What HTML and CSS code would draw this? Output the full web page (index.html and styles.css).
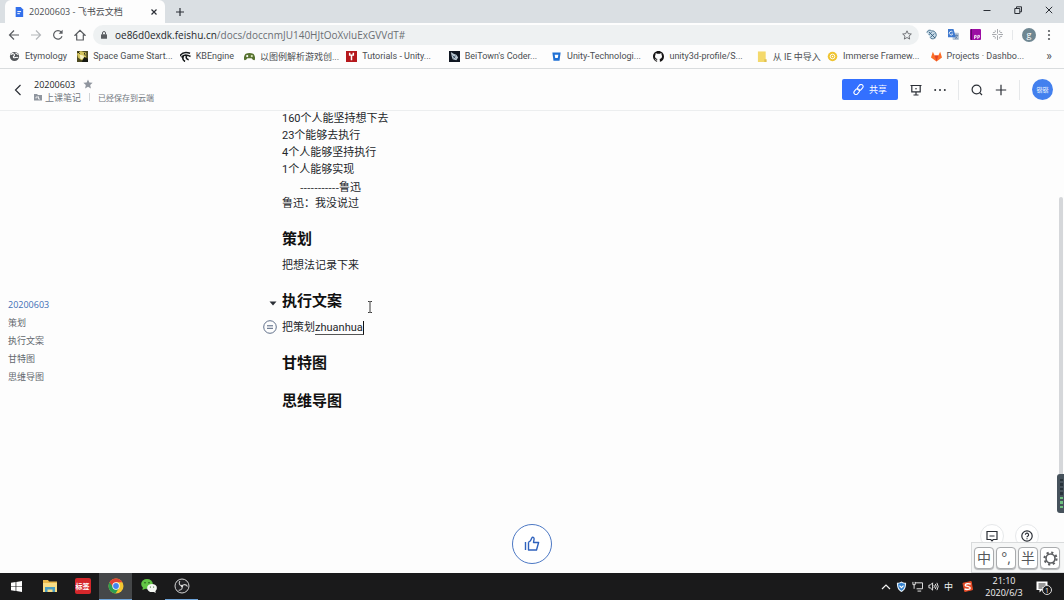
FILE: index.html
```html
<!DOCTYPE html>
<html lang="zh-CN">
<head>
<meta charset="utf-8">
<meta name="viewport" content="width=device-width, initial-scale=1">
<title>20200603 - 飞书云文档</title>
<link rel="stylesheet" href="styles.css">
</head>
<body>
<div class="tab-strip">
  <div class="tab">
    <svg class="ic-10" viewBox="0 0 10 12"><path d="M1 0h6l3 3v9H1z" fill="#3370eb"/><path d="M3 5.500h4.500M3 8h3" stroke="#fff" stroke-width="1.200"/></svg>
    <span class="tab-title">20200603 - 飞书云文档</span>
    <button class="plain" aria-label="关闭标签页"><svg class="ic-8" viewBox="0 0 8 8"><path d="M1.500 1.500l5 5M6.500 1.500l-5 5" class="ln"/></svg></button>
  </div>
  <button class="plain new-tab" aria-label="新标签页"><svg class="ic-10" viewBox="0 0 10 10"><path d="M5 1v8M1 5h8" class="ln"/></svg></button>
  <div class="window-buttons">
    <button class="plain" aria-label="最小化"><svg class="ic-8" viewBox="0 0 8 8"><path d="M.5 4.500h7" class="ln thin"/></svg></button>
    <button class="plain" aria-label="还原"><svg class="ic-8" viewBox="0 0 8 8"><path d="M.8 2.500h5v5h-5zM2.500 2.500V.8h5v5H5.800" class="ln thin"/></svg></button>
    <button class="plain" aria-label="关闭"><svg class="ic-8" viewBox="0 0 8 8"><path d="M.8.8l6.400 6.400M7.200.8L.8 7.200" class="ln thin"/></svg></button>
  </div>
</div>

<div class="toolbar">
  <div class="nav-buttons">
    <button class="plain" aria-label="后退"><svg class="ic-12" viewBox="0 0 12 12"><path d="M11 6H2M6 1.500L1.500 6 6 10.500" class="ln grey"/></svg></button>
    <button class="plain" aria-label="前进"><svg class="ic-12" viewBox="0 0 12 12"><path d="M1 6h9M6 1.500L10.500 6 6 10.500" class="ln pale"/></svg></button>
    <button class="plain" aria-label="刷新"><svg class="ic-12" viewBox="0 0 12 12"><path d="M10 7.200A4.300 4.300 0 1 1 9.300 3.200" class="ln grey"/><path d="M10.600.8v4h-4z" fill="#5a5d61"/></svg></button>
    <button class="plain" aria-label="主页"><svg class="ic-12" viewBox="0 0 12 12"><path d="M1 6.200L6 1.300l5 4.900H9.300V11H2.700V6.200z" class="ln grey"/></svg></button>
  </div>
  <div class="address">
    <svg class="ic-8" viewBox="0 0 8 8"><rect x="1" y="3.200" width="6" height="4.600" rx=".6" fill="#5a5d61"/><path d="M2.500 3.500V2a1.500 1.500 0 0 1 3 0v1.500" fill="none" stroke="#5a5d61"/></svg>
    <span class="url"><span class="host">oe86d0exdk.feishu.cn</span>/docs/doccnmJU140HJtOoXvIuExGVVdT#</span>
    <button class="plain" aria-label="收藏此页"><svg class="ic-10" viewBox="0 0 12 12"><path d="M6 1l1.500 3.400 3.700.4-2.800 2.500.8 3.600L6 9l-3.200 1.900.8-3.600L.8 4.800l3.700-.4z" class="ln grey thin"/></svg></button>
  </div>
  <div class="extensions">
    <svg class="ic-11" viewBox="0 0 12 12"><path d="M1 4a3 3 0 0 1 5-2 4.500 4.500 0 0 1 4 7.500C8 11.500 5 11 4.500 9" fill="#c8dbe8" stroke="#456d8b"/><path d="M3 3l7 7M3 6.500L6 3.500M5 9l4-4" stroke="#355d7d"/></svg>
    <svg class="ic-11" viewBox="0 0 12 12"><rect x="5" y="4" width="7" height="8" rx="1" fill="#b9c7d8"/><path d="M7 7h4M9 6v1M10.500 7l-2.500 4M8 8.500l2.500 2" stroke="#52739f" stroke-width=".8"/><path d="M0 0h6l2.500 9H0z" fill="#3f79cf"/><path d="M5 3.200A2 2 0 1 0 5.200 5.500H3.800" fill="none" stroke="#fff" stroke-width=".9"/></svg>
    <svg class="ic-11" viewBox="0 0 12 12"><rect width="12" height="12" rx="1" fill="#9c0da4"/><path d="M1.500 0v12" stroke="#510759"/><path d="M5 11V7h1.800v2H5M8.500 11V7h1.800v2H8.500" fill="none" stroke="#fff" stroke-width=".9"/></svg>
    <svg class="ic-11" viewBox="0 0 12 12"><path d="M6 0v5M6 7v5M0 6h5M7 6h5M3.500 1.500Q4.500 4 1 4M8.500 1.500Q7.500 4 11 4M3.500 10.500Q4.500 8 1 8M8.500 10.500Q7.500 8 11 8" fill="none" stroke="#94979b" stroke-width=".9"/></svg>
    <span class="divider"></span>
    <span class="profile">g</span>
    <button class="plain" aria-label="菜单"><svg class="ic-dots" viewBox="0 0 4 12"><g fill="#5a5d61"><circle cx="2" cy="2" r="1.100"/><circle cx="2" cy="6" r="1.100"/><circle cx="2" cy="10" r="1.100"/></g></svg></button>
  </div>
</div>

<nav class="bookmarks">
  <a href="#"><svg class="ic-11" viewBox="0 0 12 12"><circle cx="6" cy="6" r="5" fill="#55585c"/><path d="M2 4c2-2 4-1 4 .5S4 5.500 5 7s3-1 5 0M7 2l3 2" stroke="#fff" stroke-width="1.200" fill="none"/></svg><span>Etymology</span></a>
  <a href="#"><svg class="ic-11" viewBox="0 0 12 12"><rect width="12" height="12" fill="#4e4b22"/><path d="M0 3l4-3 6 2v5l-5 3-4-3z" fill="#d4c45d"/><path d="M3 4l4 1 1 3-4 1z" fill="#f6f0c2"/><path d="M8 7l4 2v3H6zM1 1l2 2M8 2l1 3" fill="#171912" stroke="#171912"/></svg><span>Space Game Start...</span></a>
  <a href="#"><svg class="ic-11" viewBox="0 0 12 12"><path d="M0 5.500C2 2 5 .5 11 2.500M1.500 7C4 3.500 7 3.500 11.500 6M4 5c-1.500 2.500-1 5 1.500 6.500M7.500 5C6 7 7 9 9.500 9.500" fill="none" stroke="#15191a" stroke-width="1.700"/></svg><span>KBEngine</span></a>
  <a href="#"><svg class="ic-11" viewBox="0 0 12 12"><path d="M2 3c2-1 6-1 8 0s3 7 1 7-2-2-3-2H4c-1 0-1 2-3 2S0 4 2 3z" fill="#587331"/><circle cx="3.500" cy="5.500" r="1.200" fill="#fff"/><circle cx="8.500" cy="5.500" r="1.200" fill="#dbe9bd"/></svg><span>以图例解析游戏创...</span></a>
  <a href="#"><svg class="ic-11" viewBox="0 0 12 12"><rect width="12" height="12" fill="#b5181c"/><path d="M4 2v2.500h4V2M6 4.500V10" stroke="#fff" stroke-width="1.600" fill="none"/></svg><span>Tutorials - Unity...</span></a>
  <a href="#"><svg class="ic-11" viewBox="0 0 12 12"><rect width="12" height="12" fill="#101722"/><path d="M2 1l3 2 3 1 2 3-2 3-4-1-1-3z" fill="#b9c7d2"/><path d="M4 5l3 3M7 5L5 8" stroke="#34495c"/></svg><span>BeiTown's Coder...</span></a>
  <a href="#"><svg class="ic-11" viewBox="0 0 12 12"><path d="M1.500 1.500h9L9.300 10.500H2.700z" fill="#1f70d4"/><path d="M4 4h4l-.6 3.500H4.600z" fill="#fff"/></svg><span>Unity-Technologi...</span></a>
  <a href="#"><svg class="ic-11" viewBox="0 0 16 16"><path fill="#171515" d="M8 0C3.580 0 0 3.580 0 8c0 3.540 2.290 6.530 5.470 7.590.4.070.55-.17.55-.38 0-.19-.01-.82-.01-1.490-2.010.37-2.530-.49-2.690-.94-.09-.23-.48-.94-.82-1.130-.28-.15-.68-.52-.01-.53.63-.01 1.080.58 1.230.82.72 1.210 1.870.87 2.330.66.07-.52.28-.87.51-1.070-1.780-.2-3.640-.89-3.640-3.950 0-.87.31-1.590.82-2.150-.08-.2-.36-1.020.08-2.120 0 0 .67-.21 2.200.82a7.600 7.600 0 0 1 4 0c1.530-1.040 2.200-.82 2.200-.82.44 1.100.16 1.920.08 2.120.51.56.82 1.270.82 2.150 0 3.070-1.870 3.750-3.650 3.950.29.25.54.73.54 1.480 0 1.070-.01 1.930-.01 2.200 0 .21.15.46.55.38A8 8 0 0 0 16 8c0-4.420-3.580-8-8-8z"/></svg><span>unity3d-profile/S...</span></a>
  <a href="#"><svg class="ic-11" viewBox="0 0 12 12"><path d="M1 .5h8.500V12H1z" fill="#f4d96c"/><path d="M8 9h2.500v3H8z" fill="#e0c050"/></svg><span>从 IE 中导入</span></a>
  <a href="#"><svg class="ic-11" viewBox="0 0 12 12"><circle cx="6" cy="6" r="5.200" fill="#efc431"/><circle cx="6" cy="6" r="2.500" fill="none" stroke="#fff"/><circle cx="6" cy="6" r=".8" fill="#fff"/></svg><span>Immerse Framew...</span></a>
  <a href="#"><svg class="ic-11" viewBox="0 0 12 12"><path d="M6 11.500L0 7 2 .8 4 5h4l2-4.200L12 7z" fill="#fc6d26"/><path d="M6 11.500L4 5h4z" fill="#e24329"/></svg><span>Projects · Dashbo...</span></a>
  <button class="plain more" aria-label="更多书签">»</button>
</nav>

<header class="doc-header">
  <button class="plain" aria-label="返回"><svg class="ic-12" viewBox="0 0 12 12"><path d="M8.500 1L3.500 6l5 5" class="ln"/></svg></button>
  <div class="doc-info">
    <div class="doc-name"><span>20200603</span><svg class="ic-10" viewBox="0 0 12 12"><path d="M6 .5l1.600 3.700 4 .4-3 2.700.9 4L6 9.200l-3.500 2.100.9-4-3-2.700 4-.4z" fill="#8f959e"/></svg></div>
    <div class="doc-meta"><svg class="ic-8" viewBox="0 0 8 8"><path d="M0 1h3l1 1h4v5.500H0z" fill="#8f959e"/><path d="M2 5.500V4h2.500M4.500 3.500v2.500H6" fill="none" stroke="#fff" stroke-width=".8"/></svg><a href="#">上课笔记</a><span class="divider short"></span><span class="saved">已经保存到云端</span></div>
  </div>
  <div class="doc-actions">
    <button class="share"><svg class="ic-11" viewBox="0 0 12 12"><g fill="none" stroke="#fff" stroke-width="1.200" transform="rotate(-50 6 6)"><rect x="-.5" y="3.800" width="7" height="4.400" rx="2.200"/><rect x="5.500" y="3.800" width="7" height="4.400" rx="2.200"/></g></svg><span>共享</span></button>
    <button class="plain" aria-label="演示"><svg class="ic-12" viewBox="0 0 12 12"><path d="M.5 1.500h11M1.800 1.500v6.300h8.400V1.500M6 7.800v3M3.500 11h5" class="ln"/><circle cx="6" cy="4.700" r=".8" fill="#2b2f36"/></svg></button>
    <button class="plain" aria-label="更多"><svg class="ic-12" viewBox="0 0 12 12"><g fill="#2b2f36"><circle cx="1.200" cy="6" r="1"/><circle cx="6" cy="6" r="1"/><circle cx="10.800" cy="6" r="1"/></g></svg></button>
    <span class="divider"></span>
    <button class="plain" aria-label="搜索"><svg class="ic-12" viewBox="0 0 12 12"><circle cx="5.500" cy="5.500" r="4.400" class="ln"/><path d="M8.700 8.700L11 11" class="ln"/></svg></button>
    <button class="plain" aria-label="新建"><svg class="ic-12" viewBox="0 0 12 12"><path d="M6 .8v10.400M.8 6h10.400" class="ln"/></svg></button>
    <span class="divider"></span>
    <span class="avatar">锴锴</span>
  </div>
</header>

<main class="workspace">
  <nav class="outline">
    <a class="current" href="#">20200603</a>
    <a href="#plan">策划</a>
    <a href="#copy">执行文案</a>
    <a href="#gantt">甘特图</a>
    <a href="#mind">思维导图</a>
  </nav>
  <article class="document">
    <p>160个人能坚持想下去</p>
    <p>23个能够去执行</p>
    <p>4个人能够坚持执行</p>
    <p>1个人能够实现</p>
    <p class="signature">-----------鲁迅</p>
    <p>鲁迅：我没说过</p>
    <h2 id="plan">策划</h2>
    <p>把想法记录下来</p>
    <h2 id="copy"><svg class="fold" viewBox="0 0 8 5"><path d="M.5.5h7L4 4.500z" fill="#2b2f36"/></svg>执行文案
      <svg class="pointer" viewBox="0 0 6 12"><path d="M1 .5h1.500L3 1l.5-.5H5M3 1v10M1 11.500h1.500L3 11l.5.5H5" fill="none" stroke="#222" stroke-width=".9"/></svg></h2>
    <p class="editing"><svg class="block-mark" viewBox="0 0 14 14"><circle cx="7" cy="7" r="6.300" fill="none" stroke="#50617e" stroke-width=".9"/><path d="M4 5.800h6M4 8.300h6" stroke="#50617e"/></svg>把策划<span class="composing">zhuanhua</span></p>
    <h2 id="gantt">甘特图</h2>
    <h2 id="mind">思维导图</h2>
  </article>

  <button class="like" aria-label="点赞"><svg viewBox="0 0 16 16"><path d="M1.500 6v8M4.500 6.200v7.800h8L14.600 6.500H9.500l.6-3.500C10.300 1.500 8.500.7 7.800 2L6.500 4.700 4.500 6.200" fill="none" stroke="#2f62bd" stroke-width="1.400" stroke-linejoin="round"/></svg></button>
  <div class="help-buttons">
    <button aria-label="评论"><svg class="ic-12" viewBox="0 0 12 12"><path d="M1 1.500h10v8H7.200L6 10.800 4.800 9.500H1zM3.500 6h5" class="ln"/></svg></button>
    <button aria-label="帮助"><svg class="ic-12" viewBox="0 0 12 12"><circle cx="6" cy="6" r="5.200" class="ln"/><path d="M4.400 4.700a1.600 1.600 0 1 1 2.300 1.500c-.5.3-.7.500-.7 1.100M6 8.200v1" class="ln"/></svg></button>
  </div>
  <div class="scroll-thumb"></div>
  <div class="meter"><i></i><i></i><i></i><i></i><i class="on"></i><i class="on"></i><i class="on"></i></div>
  <div class="ime">
    <button>中</button>
    <button>°,</button>
    <button>半</button>
    <button aria-label="设置"><svg viewBox="0 0 14 14"><circle cx="7" cy="7" r="4.200" fill="none" stroke="#5d5f62" stroke-width="1.500"/><circle cx="7" cy="7" r="5.600" fill="none" stroke="#5d5f62" stroke-width="2" stroke-dasharray="2 2.398"/></svg></button>
  </div>
</main>

<footer class="taskbar">
  <button aria-label="开始"><svg class="ic-11" viewBox="0 0 12 12"><path d="M0 1.800l5-.7v4.500H0zM5.800 1L12 0v5.600H5.800zM0 6.400h5v4.500l-5-.7zM5.800 6.400H12V12l-6.200-1z" fill="#fff"/></svg></button>
  <button aria-label="文件资源管理器"><svg class="ic-16" viewBox="0 0 16 16"><path d="M1 2h5l1 1.500h8V14H1z" fill="#e9b94c"/><path d="M1 5h14v9H1z" fill="#f8dd85"/><path d="M3 14V9h10v5h-2.500v-2.500h-5V14z" fill="#4a9ec2"/></svg></button>
  <button aria-label="标签"><span class="red-app">标签</span></button>
  <button class="active" aria-label="Chrome"><svg class="ic-16" viewBox="0 0 16 16"><circle cx="8" cy="8" r="7.500" fill="#f5c731"/><path d="M1.500 4.250A7.500 7.500 0 0 0 7.500 15.500L11.200 9.800 8 8z" fill="#2c9f51"/><path d="M1.500 4.250A7.500 7.500 0 0 1 14.500 4.300H8L5 9z" fill="#df4335"/><circle cx="8" cy="8" r="3.700" fill="#fff"/><circle cx="8" cy="8" r="2.900" fill="#4385ee"/></svg></button>
  <button aria-label="微信"><svg class="ic-16" viewBox="0 0 16 16"><ellipse cx="6" cy="6" rx="5.800" ry="4.900" fill="#62c545"/><path d="M2 9l-.6 3L5 10.500z" fill="#62c545"/><ellipse cx="11" cy="10" rx="4.900" ry="4.100" fill="#f4f7f2"/><path d="M12 13.500l2.700 1.500-.5-3z" fill="#f4f7f2"/><g fill="#24531b"><circle cx="4" cy="4.700" r=".8"/><circle cx="8" cy="4.700" r=".8"/><circle cx="9.400" cy="9" r=".6"/><circle cx="12.600" cy="9" r=".6"/></g></svg></button>
  <button class="running" aria-label="OBS"><svg class="ic-16" viewBox="0 0 16 16"><circle cx="8" cy="8" r="7" fill="#222225" stroke="#d5d5d5"/><g fill="none" stroke="#c9c9c9" stroke-width="1.100"><path d="M8 8C5.500 7.500 4.500 5.500 5.800 3"/><path d="M8 8c1.700-2 4-1.800 5.500.5"/><path d="M8 8c.8 2.400-.5 4.200-3.300 4.400"/></g><circle cx="8" cy="8" r="1.200" fill="#ddd"/></svg></button>
  <div class="tray">
    <svg class="ic-10" viewBox="0 0 10 10"><path d="M1 7l4-4 4 4" class="ln white"/></svg>
    <svg class="ic-11" viewBox="0 0 12 12"><path d="M1 2c2 0 4-.5 5-1.500C7 1.500 9 2 11 2c0 5-1 8-5 10C2 10 1 7 1 2z" fill="#e9f3fb"/><path d="M2.300 3C4 3 5 2.500 6 2c1 .5 2 1 3.700 1 0 4-1 6-3.700 7.500C3.300 9 2.300 7 2.300 3z" fill="#3180ce"/><path d="M3.800 5L6 7.300 8.200 5" stroke="#fff" stroke-width="1.300" fill="none"/></svg>
    <svg class="ic-11" viewBox="0 0 12 12"><path d="M3.500 2H11.500v6.500H5M1 1v3h2.500V1M2.300 4v4.500M6 11h4" class="ln white thin"/></svg>
    <svg class="ic-11" viewBox="0 0 12 12"><path d="M1 4.500h1.500L5 2v8L2.500 7.500H1zM6.500 4.500q1 1.500 0 3M8 3.200q2 2.800 0 5.600M9.700 2q2.800 4 0 8" class="ln white thin"/></svg>
    <span class="lang">中</span>
    <svg class="ic-11 sogou" viewBox="0 0 12 12"><path d="M1 2.500L10 .5l1.500 9L3 11.500z" fill="#e94d27" stroke="#e94d27" stroke-linejoin="round"/><path d="M9.500 3.500C7 2.500 3.500 2.800 3.500 4.500s5.500 1.200 5.500 3S5 9.800 2.800 8.700" fill="none" stroke="#fff" stroke-width="1.500"/></svg>
    <div class="clock"><time>21:10</time><span>2020/6/3</span></div>
    <div class="notice"><svg class="ic-12" viewBox="0 0 12 12"><path d="M.5.5h11v8.500H6L3.500 11.500V9h-3z" fill="#fff"/><path d="M2.500 3h7M2.500 5h7M2.500 7h4" stroke="#1b1b1b" stroke-width=".9"/></svg><span class="count">1</span></div>
  </div>
</footer>
</body>
</html>
```

FILE: styles.css
```css
* { box-sizing: border-box; }

body {
  display: flex;
  flex-direction: column;
  height: 100vh;
  margin: 0;
  overflow: hidden;
  background: #fdfdfd;
  color: #24272b;
  font-family: "Open Sans", "Noto Sans CJK SC", sans-serif;
  font-size: 9px;
}

a { color: inherit; text-decoration: none; }
button { padding: 0; border: 0; font: inherit; color: inherit; }
svg { display: block; flex: none; }

.plain { display: grid; place-items: center; background: none; }

.ic-8 { width: 8px; height: 8px; }
.ic-10 { width: 10px; height: 10px; }
.ic-11 { width: 11px; height: 11px; }
.ic-12 { width: 12px; height: 12px; }
.ic-16 { width: 16px; height: 16px; }
.ic-dots { width: 4px; height: 12px; }

.ln { fill: none; stroke: #2b2f36; stroke-width: 1.2; }
.thin { stroke-width: 1; }
.grey { stroke: #5a5d61; }
.pale { stroke: #b4b7ba; }
.white { stroke: #f2f2f2; }

.divider { width: 1px; height: 20px; background: #e6e8ea; }
.divider.short { height: 8px; background: #d0d3d6; }

/* Browser window */
.tab-strip {
  display: flex;
  flex: none;
  height: 23px;
  padding-left: 5px;
  background: #dadfe3;
}
.tab {
  display: flex;
  align-items: center;
  gap: 5px;
  width: 160px;
  padding: 0 7px 0 9px;
  border-radius: 6px 6px 0 0;
  background: #fdfdfd;
}
.tab-title { flex: 1; color: #4b4e52; white-space: nowrap; }
.new-tab { width: 30px; }
.window-buttons {
  display: flex;
  gap: 23px;
  height: 19px;
  margin-left: auto;
  padding-right: 11px;
}

.toolbar {
  display: flex;
  align-items: center;
  flex: none;
  height: 23px;
  padding: 0 13px 0 8px;
}
.nav-buttons { display: flex; gap: 10px; }
.address {
  display: flex;
  flex: 1;
  align-items: center;
  gap: 7px;
  height: 20px;
  margin: 0 7px;
  padding: 0 7px;
  border-radius: 10px;
  background: #eef1f2;
}
.url { flex: 1; color: #6a6e73; font-size: 10px; }
.host { color: #24272b; }
.extensions { display: flex; align-items: center; gap: 11px; }
.extensions .divider { height: 10px; margin: 0 -2px; }
.profile {
  display: grid;
  place-items: center;
  width: 14px;
  height: 14px;
  border-radius: 50%;
  background: #6f8792;
  color: #fff;
}

.bookmarks {
  display: grid;
  grid-template-columns: 68fr 102fr 64fr 102fr 102fr 102fr 102fr 103fr 70fr 103fr 106fr 24fr;
  align-items: center;
  flex: none;
  height: 23px;
  padding: 0 3px 2px 9px;
  border-bottom: 1px solid #d9dcde;
  color: #4b4e52;
  font-family: Roboto, "Noto Sans CJK SC", sans-serif;
}
.bookmarks a { display: flex; align-items: center; gap: 5px; min-width: 0; white-space: nowrap; }
.more { font-size: 12px; }

/* Document header */
.doc-header {
  display: flex;
  align-items: center;
  flex: none;
  height: 42px;
  padding: 0 11px 0 12px;
  border-bottom: 1px solid #eceeef;
}
.doc-info { margin-left: 10px; padding-top: 2px; line-height: 13px; }
.doc-name, .doc-meta { display: flex; align-items: center; }
.doc-name { gap: 8px; }
.doc-meta { gap: 3px; color: #73787f; }
.doc-meta .divider { margin: 0 5px; }
.saved { font-size: 8px; }
.doc-actions { display: flex; align-items: center; gap: 12px; margin-left: auto; }
.share {
  display: flex;
  align-items: center;
  justify-content: center;
  gap: 5px;
  width: 56px;
  height: 21px;
  border-radius: 2px;
  background: #3370ff;
  color: #fff;
}
.avatar {
  display: grid;
  place-items: center;
  width: 21px;
  height: 21px;
  border-radius: 50%;
  background: #4380ee;
  color: #fff;
  font-size: 6px;
}

/* Document body */
.workspace {
  position: relative;
  display: flex;
  flex: 1;
  min-height: 0;
  overflow: hidden;
}
.outline {
  display: flex;
  flex-direction: column;
  align-self: center;
  flex: none;
  width: 282px;
  padding: 0 0 2px 8px;
  color: #63686e;
  line-height: 18px;
}
.outline .current { color: #426fb5; }
.document {
  flex: 1;
  margin-top: -1px;
  font-family: Roboto, "Noto Sans CJK SC", sans-serif;
  font-size: 11px;
  line-height: 17px;
}
.document p { margin: 0; }
.document .signature {
  padding-left: 18px;
  font-family: "Open Sans", "Noto Sans CJK SC", sans-serif;
}
.document h2 {
  position: relative;
  margin: 17px 0 7px;
  color: #111;
  font-size: 15px;
  line-height: 21px;
}
.fold { position: absolute; left: -13px; top: 10px; width: 8px; height: 5px; }
.pointer { position: absolute; left: 85px; top: 10px; width: 6px; height: 12px; }
.editing { position: relative; }
.block-mark { position: absolute; left: -19px; top: 1px; width: 14px; height: 14px; }
.composing { border-bottom: 1px solid #555; border-right: 1px solid #111; }

.like {
  position: absolute;
  left: 50%;
  bottom: 9px;
  display: grid;
  place-items: center;
  width: 40px;
  height: 40px;
  margin-left: -20px;
  border: 1px solid #4c78c4;
  border-radius: 50%;
  background: #fff;
}
.like svg { width: 16px; height: 16px; }
.help-buttons { position: absolute; right: 25px; bottom: 25px; display: flex; gap: 11px; }
.help-buttons button {
  display: grid;
  place-items: center;
  width: 24px;
  height: 24px;
  border: 1px solid #e6e8ea;
  border-radius: 50%;
  background: #fff;
}
.scroll-thumb {
  position: absolute;
  top: 86px;
  right: 1px;
  width: 4px;
  height: 280px;
  border-radius: 2px;
  background: #d5d7da;
}
.meter {
  position: absolute;
  right: 0;
  bottom: 60px;
  display: grid;
  gap: 2px;
  width: 7px;
  height: 39px;
  padding: 5px 1px 5px 3px;
  border-radius: 3px 0 0 3px;
  background: #46525c;
}
.meter i { background: #28333b; }
.meter .on { background: #6fc281; }
.ime {
  position: absolute;
  right: 0;
  bottom: 0;
  display: flex;
  gap: 2px;
  padding: 4px 4px 3px 2px;
  border: 1px solid #d9dbdc;
  border-right: 0;
  background: #f6f7f7;
}
.ime button {
  display: grid;
  place-items: center;
  width: 20px;
  height: 22px;
  border: 1px solid #a9abad;
  border-radius: 4px;
  background: #fff;
  box-shadow: 0 1px 1px #b5b7b9;
  color: #54575a;
  font-size: 14px;
  line-height: 18px;
}
.ime svg { width: 15px; height: 15px; }

/* Windows taskbar */
.taskbar {
  display: flex;
  flex: none;
  height: 27px;
  background: #1a1a1b;
  color: #f2f2f2;
}
.taskbar button {
  display: grid;
  place-items: center;
  width: 33px;
  border-bottom: 1px solid transparent;
  background: none;
}
.taskbar .active { border-color: #6fa5db; background: #454749; }
.taskbar .running { border-color: #6fa5db; }
.red-app {
  display: grid;
  place-items: center;
  width: 16px;
  height: 16px;
  border-radius: 2px;
  background: #d5272b;
  color: #fff;
  font-size: 7px;
  font-weight: 700;
}
.tray { display: flex; align-items: center; gap: 5px; margin-left: auto; padding-right: 16px; }
.sogou { margin-left: 4px; }
.clock {
  display: grid;
  justify-items: center;
  width: 42px;
  margin: 0 6px 0 5px;
  line-height: 12px;
}
.notice { position: relative; }
.count {
  position: absolute;
  left: 6px;
  top: 4px;
  display: grid;
  place-items: center;
  width: 10px;
  height: 10px;
  border: 1px solid #ddd;
  border-radius: 50%;
  background: #1a1a1b;
  font-size: 7px;
}
```
